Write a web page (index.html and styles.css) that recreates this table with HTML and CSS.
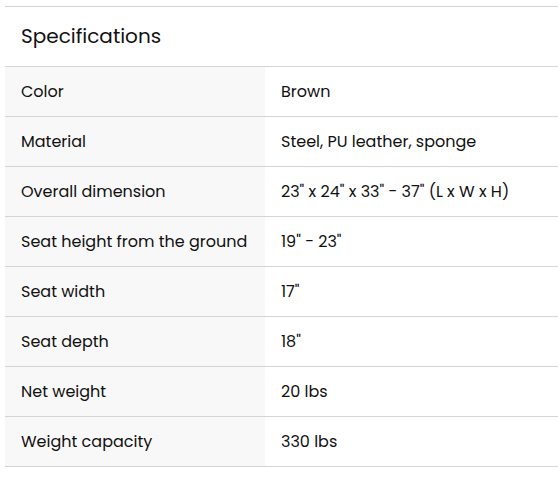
FILE: index.html
```html
<!DOCTYPE html>
<html>
<head>
<meta charset="utf-8">
<link rel="stylesheet" href="styles.css">
</head>
<body>
<section class="specs">
  <h2 class="specs-title">Specifications</h2>
  <table class="specs-table">
    <tr><th>Color</th><td>Brown</td></tr>
    <tr><th>Material</th><td>Steel, PU leather, sponge</td></tr>
    <tr><th>Overall dimension</th><td>23" x 24" x 33" - 37" (L x W x H)</td></tr>
    <tr><th>Seat height from the ground</th><td>19" - 23"</td></tr>
    <tr><th>Seat width</th><td>17"</td></tr>
    <tr><th>Seat depth</th><td>18"</td></tr>
    <tr><th>Net weight</th><td>20 lbs</td></tr>
    <tr><th>Weight capacity</th><td>330 lbs</td></tr>
  </table>
</section>
</body>
</html>
```
FILE: styles.css
```css
html, body {
  margin: 0;
  padding: 0;
  background: #fff;
}
body {
  padding: 6px 0 0 5px;
  font-family: "Poppins", "Open Sans", sans-serif;
  color: #111;
}
.specs {
  border-top: 1px solid #d4d4d4;
}
.specs-title {
  margin: 0;
  height: 57px;
  padding: 0 0 2px 16px;
  display: flex;
  align-items: center;
  font-size: 20px;
  font-weight: 400;
  border-bottom: 1px solid #d4d4d4;
}
.specs-table {
  width: 100%;
  border-collapse: collapse;
  font-size: 16px;
}
.specs-table th,
.specs-table td {
  height: 49px;
  padding: 0 16px;
  text-align: left;
  font-weight: 400;
  border-bottom: 1px solid #d4d4d4;
}
.specs-table th {
  width: 228px;
  background: #f8f8f8;
}
```
